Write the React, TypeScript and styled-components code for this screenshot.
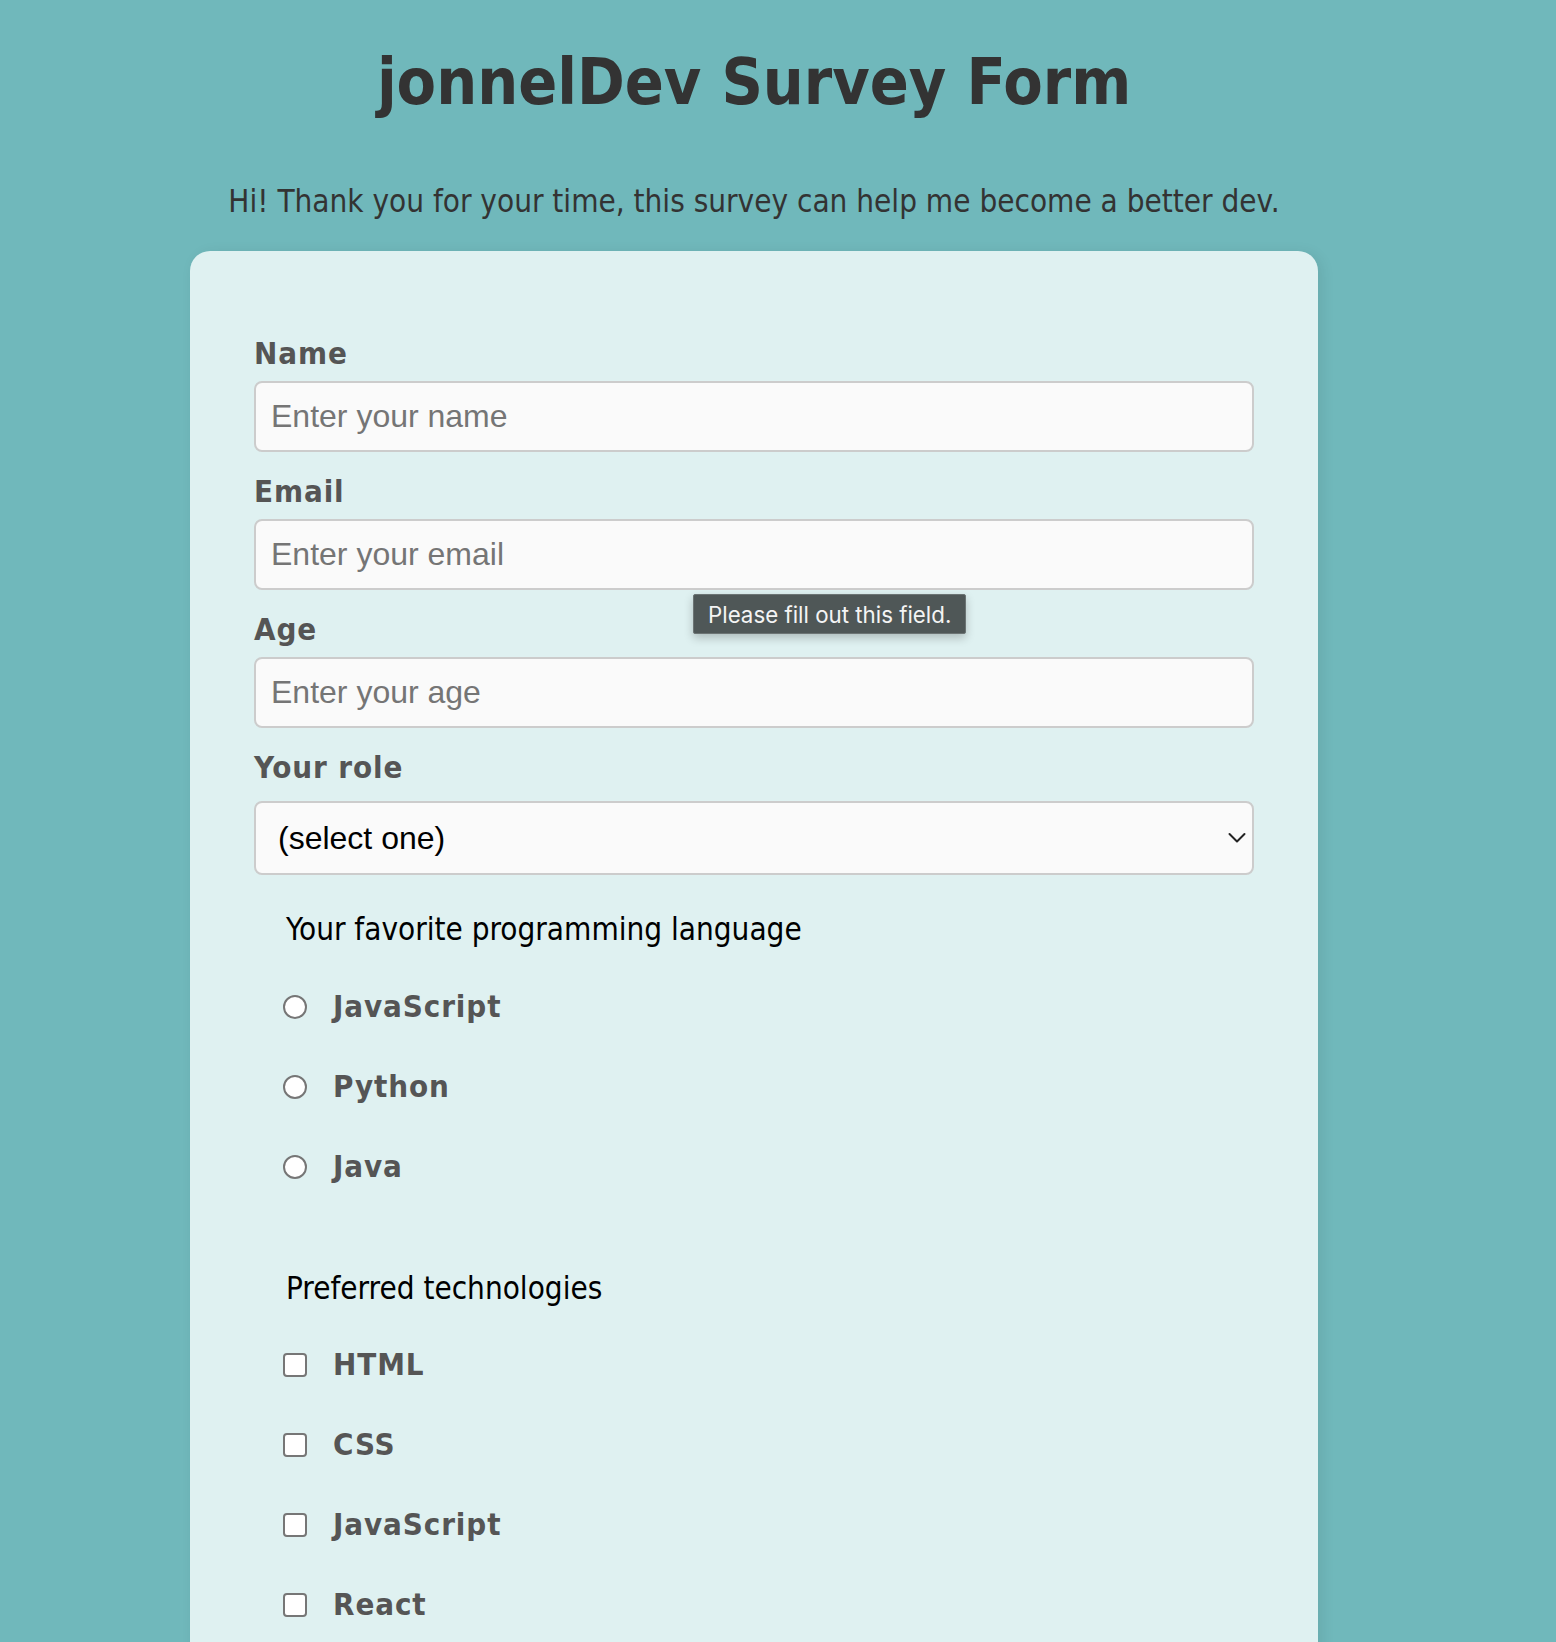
import React from "react";
import styled, { createGlobalStyle } from "styled-components";

const Global = createGlobalStyle`
  html, body { margin: 0; padding: 0; }
  body {
    background: #70b8bb;
    font-family: "DejaVu Sans Condensed", "DejaVu Sans", sans-serif;
    color: #333;
  }
`;

const Page = styled.div`
  width: 1508px;
  padding-top: 42px;
`;

const Title = styled.h1`
  margin: 0;
  text-align: center;
  font-size: 64px;
  line-height: 80px;
  font-weight: bold;
  color: #333;
`;

const Description = styled.p`
  margin: 61px 0 0;
  text-align: center;
  font-size: 31.2px;
  line-height: 36px;
  color: #333;
`;

const Card = styled.form`
  box-sizing: border-box;
  width: 1128px;
  margin: 32px auto 0;
  padding: 84px 64px 240px;
  background: #dff1f1;
  border-radius: 20px;
  box-shadow: 4px 2px 14px rgba(0, 0, 0, 0.08);
`;

const Field = styled.div`
  position: relative;
`;

const Label = styled.label<{ $gap?: number }>`
  display: block;
  font-size: 31px;
  letter-spacing: 0.9px;
  line-height: 36px;
  font-weight: bold;
  color: #555;
  margin-bottom: ${(p) => p.$gap ?? 10}px;
`;

const TextInput = styled.input`
  display: block;
  box-sizing: border-box;
  width: 100%;
  height: 71px;
  margin: 0 0 21px;
  padding: 0 15px;
  border: 2px solid #cccccc;
  border-radius: 8px;
  background: #fafafa;
  font-family: "Liberation Sans", Arial, sans-serif;
  font-size: 32px;
  color: #333;
  outline: none;
  &::placeholder { color: #757575; }
`;

const InputWrap = styled.div`
  position: relative;
`;

const Tooltip = styled.div`
  position: absolute;
  left: 439px;
  top: 75px;
  z-index: 2;
  box-sizing: border-box;
  height: 40px;
  padding: 0 14px;
  display: flex;
  align-items: center;
  background: #4f5757;
  border: 1px solid #6c7474;
  border-radius: 2px;
  box-shadow: 0 4px 10px rgba(0, 0, 0, 0.22);
  color: #f4f4f4;
  font-family: Inter, "Liberation Sans", sans-serif;
  font-size: 22.3px;
  white-space: nowrap;
`;

const SelectWrap = styled.div`
  position: relative;
`;

const Select = styled.select`
  display: block;
  box-sizing: border-box;
  width: 100%;
  height: 74px;
  margin: 0;
  padding: 0 40px 0 22px;
  border: 2px solid #cccccc;
  border-radius: 8px;
  background: #fafafa;
  appearance: none;
  -webkit-appearance: none;
  font-family: "Liberation Sans", Arial, sans-serif;
  font-size: 32px;
  color: #000;
  outline: none;
`;

const Chevron = styled.svg`
  position: absolute;
  right: 8px;
  top: 50%;
  transform: translateY(-50%);
  pointer-events: none;
`;

const Group = styled.div<{ $top: number }>`
  margin-top: ${(p) => p.$top}px;
`;

const Legend = styled.p<{ $gap: number }>`
  margin: 0 0 ${(p) => p.$gap}px;
  padding-left: 32px;
  font-size: 31.2px;
  line-height: 36px;
  color: #000;
`;

const OptionRow = styled.label`
  display: flex;
  align-items: center;
  height: 80px;
  padding-left: 29px;
  font-size: 31px;
  letter-spacing: 0.9px;
  line-height: 36px;
  font-weight: bold;
  color: #555;
`;

const Radio = styled.input`
  appearance: none;
  -webkit-appearance: none;
  box-sizing: border-box;
  width: 24px;
  height: 24px;
  margin: 2px 26px 0 0;
  border: 2px solid #767676;
  border-radius: 50%;
  background: #fff;
  flex: none;
`;

const Checkbox = styled.input`
  appearance: none;
  -webkit-appearance: none;
  box-sizing: border-box;
  width: 24px;
  height: 24px;
  margin: 2px 26px 0 0;
  border: 2px solid #767676;
  border-radius: 4px;
  background: #fff;
  flex: none;
`;

const languages = ["JavaScript", "Python", "Java"];
const techs = ["HTML", "CSS", "JavaScript", "React"];

export default function App() {
  return (
    <>
      <Global />
      <Page>
        <Title id="title">jonnelDev Survey Form</Title>
        <Description id="description">
          Hi! Thank you for your time, this survey can help me become a better dev.
        </Description>
        <Card id="survey-form" onSubmit={(e) => e.preventDefault()}>
          <Field>
            <Label htmlFor="name">Name</Label>
            <TextInput id="name" type="text" placeholder="Enter your name" />
          </Field>
          <Field>
            <Label htmlFor="email">Email</Label>
            <InputWrap>
              <TextInput id="email" type="email" placeholder="Enter your email" />
              <Tooltip>Please fill out this field.</Tooltip>
            </InputWrap>
          </Field>
          <Field>
            <Label htmlFor="number">Age</Label>
            <TextInput id="number" type="number" placeholder="Enter your age" />
          </Field>
          <Field>
            <Label htmlFor="dropdown" $gap={16}>Your role</Label>
            <SelectWrap>
              <Select id="dropdown" defaultValue="">
                <option value="">(select one)</option>
                <option value="student">Student</option>
                <option value="dev">Developer</option>
                <option value="other">Other</option>
              </Select>
              <Chevron width="18" height="11" viewBox="0 0 18 11" fill="none">
                <path d="M1.5 1.5 L9 9 L16.5 1.5" stroke="#222" strokeWidth="2" strokeLinecap="round" strokeLinejoin="round" />
              </Chevron>
            </SelectWrap>
          </Field>
          <Group $top={36}>
            <Legend $gap={19}>Your favorite programming language</Legend>
            {languages.map((l) => (
              <OptionRow key={l}>
                <Radio type="radio" name="language" value={l} />
                {l}
              </OptionRow>
            ))}
          </Group>
          <Group $top={64}>
            <Legend $gap={18}>Preferred technologies</Legend>
            {techs.map((t) => (
              <OptionRow key={t}>
                <Checkbox type="checkbox" value={t} />
                {t}
              </OptionRow>
            ))}
          </Group>
        </Card>
      </Page>
    </>
  );
}
